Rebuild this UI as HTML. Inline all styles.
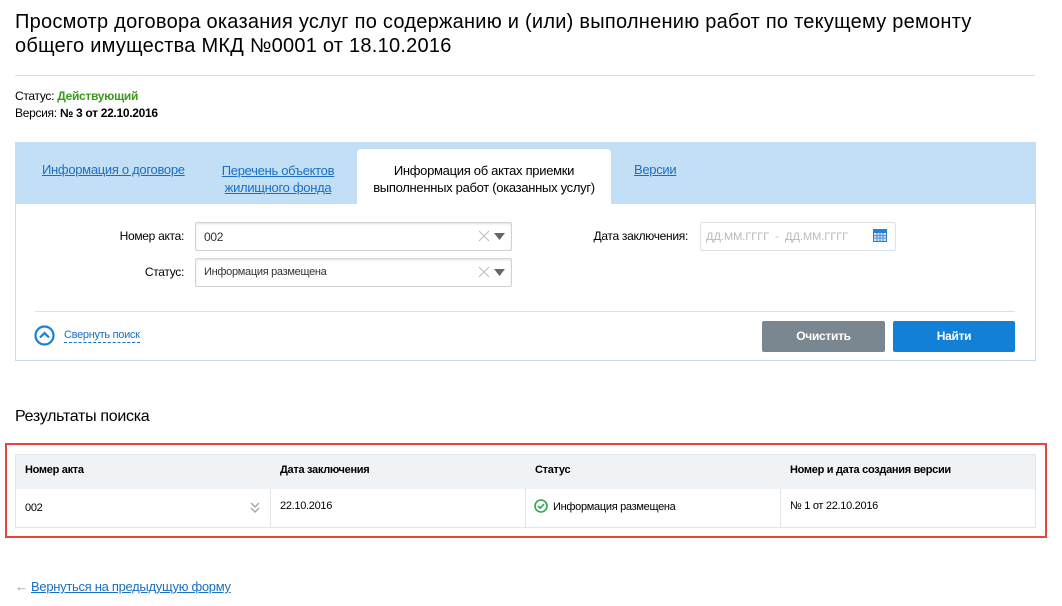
<!DOCTYPE html>
<html><head><meta charset="utf-8"><style>
body{margin:0;width:1062px;height:606px;background:#fff;font-family:"Liberation Sans",sans-serif;color:#000;position:relative;overflow:hidden}
.a{position:absolute}
.lnk{color:#1a6fc4;text-decoration:underline}
.t{font-size:12px;letter-spacing:-0.3px}
.box{position:absolute;border:1px solid #cfd4d8;border-radius:2px;background:#fff;box-shadow:inset 0 1px 2px rgba(0,0,0,.12)}
</style></head><body>
<div class="a" style="left:15px;top:10px;font-size:20px;line-height:24px;letter-spacing:0.25px;width:1000px;white-space:nowrap">Просмотр договора оказания услуг по содержанию и (или) выполнению работ по текущему ремонту<br>общего имущества МКД №0001 от 18.10.2016</div>
<div class="a" style="left:15px;top:75px;width:1020px;height:1px;background:#dcdcdc"></div>
<div class="a t" style="left:15px;top:89px">Статус: <b style="color:#3a9a1e">Действующий</b></div>
<div class="a t" style="left:15px;top:106px">Версия: <b>№ 3 от 22.10.2016</b></div>

<div class="a" style="left:15px;top:142px;width:1019px;height:218px;border:1px solid #c4ddf3;border-top:0;background:#fff"></div>
<div class="a" style="left:15px;top:142px;width:1021px;height:62px;background:#c3dff5"></div>
<div class="a" style="left:357px;top:149px;width:254px;height:55px;background:#fff;border-radius:4px 4px 0 0"></div>
<div class="a t lnk" style="left:42px;top:162px;font-size:13px">Информация о договоре</div>
<div class="a t lnk" style="left:214px;top:162px;font-size:13px;width:128px;text-align:center;line-height:17px">Перечень объектов жилищного фонда</div>
<div class="a t" style="left:357px;top:162px;font-size:13px;width:254px;text-align:center;line-height:17px">Информация об актах приемки выполненных работ (оказанных услуг)</div>
<div class="a t lnk" style="left:634px;top:162px;font-size:13px">Версии</div>

<div class="a t" style="left:80px;top:229px;width:104px;text-align:right">Номер акта:</div>
<div class="box" style="left:195px;top:222px;width:315px;height:27px"></div>
<div class="a t" style="left:204px;top:230px;color:#333">002</div>
<div class="a t" style="left:80px;top:265px;width:104px;text-align:right">Статус:</div>
<div class="box" style="left:195px;top:258px;width:315px;height:27px"></div>
<div class="a t" style="left:204px;top:266px;font-size:11px;color:#333">Информация размещена</div>
<svg class="a" style="left:477px;top:229px" width="30" height="14"><path d="M2 2l10 10M12 2L2 12" stroke="#bbb" stroke-width="1"/><path d="M17 4h11l-5.5 7z" fill="#666"/></svg>
<svg class="a" style="left:477px;top:265px" width="30" height="14"><path d="M2 2l10 10M12 2L2 12" stroke="#bbb" stroke-width="1"/><path d="M17 4h11l-5.5 7z" fill="#666"/></svg>

<div class="a t" style="left:560px;top:229px;width:128px;text-align:right">Дата заключения:</div>
<div class="box" style="left:700px;top:222px;width:194px;height:27px;box-shadow:none;border-color:#dde2e6"></div>
<div class="a" style="left:706px;top:231px;font-size:11px;color:#b8b8b8">ДД.ММ.ГГГГ &nbsp;- &nbsp;ДД.ММ.ГГГГ</div>
<svg class="a" style="left:873px;top:228px" width="14" height="14"><rect x="0" y="1" width="14" height="13" fill="#2a7fd4"/><rect x="1" y="5" width="12" height="8" fill="#cfe3f7"/><path d="M1 7.5h12M1 10h12M4 5v8M7 5v8M10 5v8" stroke="#2a7fd4" stroke-width=".8"/></svg>

<div class="a" style="left:35px;top:311px;width:980px;height:1px;background:#e0e0e0"></div>
<svg class="a" style="left:34px;top:325px" width="21" height="21"><circle cx="10.5" cy="10.5" r="9" fill="none" stroke="#1a7fd6" stroke-width="2.2"/><path d="M6 12.5l4.5-4.5 4.5 4.5" fill="none" stroke="#1a7fd6" stroke-width="2.2"/></svg>
<div class="a t" style="left:64px;top:328px;font-size:11px;color:#1a6fc4;border-bottom:1px dashed #1a6fc4;line-height:14px">Свернуть поиск</div>
<div class="a t" style="left:762px;top:321px;width:123px;height:31px;background:#7b8790;border-radius:2px;color:#fff;font-weight:bold;text-align:center;line-height:31px">Очистить</div>
<div class="a t" style="left:893px;top:321px;width:122px;height:31px;background:#1180d6;border-radius:2px;color:#fff;font-weight:bold;text-align:center;line-height:31px">Найти</div>

<div class="a" style="left:15px;top:408px;font-size:16px;letter-spacing:-0.3px">Результаты поиска</div>
<div class="a" style="left:5px;top:443px;width:1038px;height:91px;border:2px solid #e2463d"></div>
<div class="a" style="left:15px;top:454px;width:1019px;height:72px;border:1px solid #e2e6ea"></div>
<div class="a" style="left:16px;top:455px;width:1019px;height:34px;background:#eff3f6"></div>
<div class="a" style="left:270px;top:489px;width:1px;height:38px;background:#e2e6ea"></div>
<div class="a" style="left:525px;top:489px;width:1px;height:38px;background:#e2e6ea"></div>
<div class="a" style="left:780px;top:489px;width:1px;height:38px;background:#e2e6ea"></div>
<div class="a t" style="left:25px;top:464px;font-size:11px;font-weight:bold">Номер акта</div>
<div class="a t" style="left:280px;top:464px;font-size:11px;font-weight:bold">Дата заключения</div>
<div class="a t" style="left:535px;top:464px;font-size:11px;font-weight:bold">Статус</div>
<div class="a t" style="left:790px;top:464px;font-size:11px;font-weight:bold">Номер и дата создания версии</div>
<div class="a t" style="left:25px;top:502px;font-size:11px">002</div>
<svg class="a" style="left:249px;top:501px" width="12" height="13"><path d="M2 2l4 4 4-4M2 7l4 4 4-4" fill="none" stroke="#aaa" stroke-width="1.5"/></svg>
<div class="a t" style="left:280px;top:500px;font-size:11px">22.10.2016</div>
<svg class="a" style="left:534px;top:499px" width="14" height="14"><circle cx="7" cy="7" r="6" fill="none" stroke="#2fa44a" stroke-width="1.6"/><path d="M4 7l2.2 2.2L10 5" fill="none" stroke="#2fa44a" stroke-width="1.6"/></svg>
<div class="a t" style="left:553px;top:501px;font-size:11px">Информация размещена</div>
<div class="a t" style="left:790px;top:500px;font-size:11px">№ 1 от 22.10.2016</div>

<div class="a t" style="left:15px;top:579px;font-size:13px"><span style="color:#999">←</span> <span class="lnk">Вернуться на предыдущую форму</span></div>
</body></html>
